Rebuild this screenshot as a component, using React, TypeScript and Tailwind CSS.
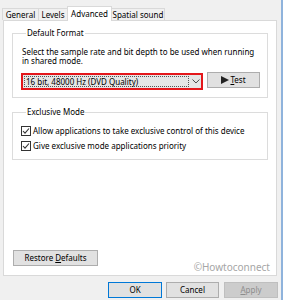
import React from "react";

function Check() {
  return (
    <span className="w-[10px] h-[10px] border border-[#333333] bg-white flex items-center justify-center shrink-0">
      <svg width="8" height="8" viewBox="0 0 8 8">
        <polyline points="1,4 3,6.2 7,1.5" fill="none" stroke="#333333" strokeWidth="1.1" />
      </svg>
    </span>
  );
}

export default function App() {
  return (
    <div className="w-[283px] h-[300px] bg-[#f0f0f0] flex overflow-hidden font-['Noto_Sans',sans-serif] text-[8px] text-black">
      <div className="w-[281px] flex flex-col">
        {/* tabs */}
        <div className="flex items-end h-[20px] pl-[2px]">
          <div className="w-[37px] h-[12px] border border-b-0 border-[#d9d9d9] flex items-center justify-center leading-[10px]">General</div>
          <div className="w-[30px] h-[12px] -ml-px border border-b-0 border-[#d9d9d9] flex items-center justify-center leading-[10px]">Levels</div>
          <div className="w-[45px] h-[15px] -ml-px -mb-px relative z-10 bg-white border border-b-0 border-[#d9d9d9] flex items-center justify-center leading-[10px]">Advanced</div>
          <div className="w-[54px] h-[12px] -ml-px border border-b-0 border-[#d9d9d9] flex items-center justify-center leading-[10px]">Spatial sound</div>
        </div>
        {/* panel */}
        <div className="ml-[3px] w-[274px] h-[256px] bg-white border border-[#d9d9d9] relative px-[8px] flex flex-col">
          <fieldset className="mt-[7px] border border-[#dcdcdc] pl-[8px] pb-[7px]">
            <legend className="ml-[5px] px-[1px] leading-[10px]">Default Format</legend>
            <div className="pt-[9px] pl-[1px] leading-[9px]">
              Select the sample rate and bit depth to be used when running
              <br />
              in shared mode.
            </div>
            <div className="mt-[8px] flex items-start">
              <div className="w-[182px] h-[17px] border-2 border-[#e4171b] bg-[#e5e5e5] p-[1px]">
                <div className="flex items-center h-full">
                  <div className="w-[167px] h-full border border-dotted border-[#555555] flex items-center pl-[1px] leading-[10px]">
                    16 bit, 48000 Hz (DVD Quality)
                  </div>
                  <svg width="8" height="5" viewBox="0 0 8 5" className="ml-[3px]">
                    <polyline points="0.5,0.5 4,4 7.5,0.5" fill="none" stroke="#444444" strokeWidth="1" />
                  </svg>
                </div>
              </div>
              <button className="ml-[4px] -mt-px w-[53px] h-[16px] bg-[#e1e1e1] border border-[#adadad] flex items-center justify-center leading-[10px] gap-[1px]">
                <svg width="8" height="8" viewBox="0 0 8 8">
                  <polygon points="0,0 8,4 0,8" fill="#222222" />
                </svg>
                <span><span className="underline">T</span>est</span>
              </button>
            </div>
          </fieldset>
          <fieldset className="mt-[9px] border border-[#dcdcdc] pl-[8px] pb-[8px]">
            <legend className="ml-[5px] px-[1px] leading-[10px]">Exclusive Mode</legend>
            <div className="pt-[9px] flex flex-col gap-[5px]">
              <div className="flex items-center h-[10px] gap-[2px] leading-[10px]">
                <Check />
                <span>Allow applications to take exclusive control of this device</span>
              </div>
              <div className="flex items-center h-[10px] gap-[2px] leading-[10px]">
                <Check />
                <span>Give exclusive mode applications priority</span>
              </div>
            </div>
          </fieldset>
          <button className="mt-[90px] ml-[1px] w-[85px] h-[16px] bg-[#e1e1e1] border border-[#adadad] flex items-center justify-center leading-[10px]">
            <span>Restore <span className="underline">D</span>efaults</span>
          </button>
          <div className="absolute right-[6px] top-[240px] leading-[12px] text-[10px] text-[#a6a6a6]">©Howtoconnect</div>
        </div>
        {/* bottom buttons */}
        <div className="flex justify-end pr-[3px] mt-[6px]">
          <button className="w-[54px] h-[16px] bg-[#e1e1e1] border border-[#0078d7] flex items-center justify-center leading-[10px]">OK</button>
          <button className="ml-[4px] w-[53px] h-[16px] bg-[#e1e1e1] border border-[#adadad] flex items-center justify-center leading-[10px]">Cancel</button>
          <button className="ml-[5px] w-[54px] h-[16px] bg-[#cccccc] border border-[#bfbfbf] text-[#8c8c8c] flex items-center justify-center leading-[10px]">
            <span><span className="underline">A</span>pply</span>
          </button>
        </div>
      </div>
      <div className="w-[2px] bg-[#8fb3dc]" />
    </div>
  );
}
